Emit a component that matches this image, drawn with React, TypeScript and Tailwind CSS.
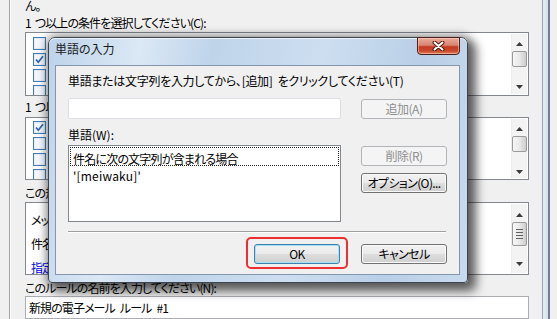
import React from "react";

const F = "font-['Noto_Sans_CJK_JP','Noto_Sans',sans-serif] [font-feature-settings:'palt'] text-[12px] leading-[16px]";

function Sp({ w = 4 }: { w?: number }) {
  return <span className="inline-block" style={{ width: w }} />;
}

function Check({ checked }: { checked?: boolean }) {
  return (
    <svg width="13" height="13" viewBox="0 0 13 13" className="block shrink-0">
      <rect x="0.5" y="0.5" width="12" height="12" fill="#f4f7fb" stroke="#3f7fc1" />
      <rect x="1.5" y="1.5" width="10" height="10" fill="none" stroke="#e3ebf4" />
      {checked && (
        <path d="M3 6.5 L5.3 9.2 L10 3.2" fill="none" stroke="#2d66ae" strokeWidth="1.7" />
      )}
    </svg>
  );
}

function UpArrow() {
  return (
    <svg width="7" height="4" viewBox="0 0 7 4" className="block">
      <path d="M0 4 L3.5 0 L7 4 Z" fill="#3a3a3a" />
    </svg>
  );
}
function DownArrow() {
  return (
    <svg width="7" height="4" viewBox="0 0 7 4" className="block">
      <path d="M0 0 L3.5 4 L7 0 Z" fill="#3a3a3a" />
    </svg>
  );
}

function ScrollBar({
  upTop,
  thumbTop,
  thumbH,
  downTop,
  grip,
}: {
  upTop: number;
  thumbTop: number;
  thumbH: number;
  downTop: number;
  grip?: boolean;
}) {
  return (
    <div className="w-[16px] h-full bg-[#f3f3f3] border-l border-[#ececec] relative shrink-0">
      <div className="absolute left-[4px]" style={{ top: upTop }}>
        <UpArrow />
      </div>
      <div
        className="absolute left-[0px] w-[15px] rounded-[2px] border border-[#9a9a9a] bg-gradient-to-r from-[#f6f6f6] via-[#e9e9e9] to-[#cdcdcd] flex flex-col items-center justify-center gap-[2px]"
        style={{ top: thumbTop, height: thumbH }}
      >
        {grip && (
          <>
            <div className="w-[7px] h-[1px] bg-[#606060]" />
            <div className="w-[7px] h-[1px] bg-[#606060]" />
            <div className="w-[7px] h-[1px] bg-[#606060]" />
            <div className="w-[7px] h-[1px] bg-[#606060]" />
          </>
        )}
      </div>
      <div className="absolute left-[4px]" style={{ top: downTop }}>
        <DownArrow />
      </div>
    </div>
  );
}

function Btn({
  children,
  disabled,
  def,
  className = "",
}: {
  children: React.ReactNode;
  disabled?: boolean;
  def?: boolean;
  className?: string;
}) {
  if (disabled) {
    return (
      <div
        className={`w-[86px] h-[20px] rounded-[3px] border border-[#b1b5ba] bg-[#f4f4f4] text-[#8e8e8e] flex items-center justify-center tracking-[-0.5px] ${className}`}
      >
        {children}
      </div>
    );
  }
  return (
    <div
      className={`w-[86px] h-[20px] rounded-[3px] border ${
        def ? "border-[#3c7fb1] shadow-[inset_0_0_0_1px_#a6e0f7]" : "border-[#707070] shadow-[inset_0_0_0_1px_#fbfbfb]"
      } bg-[linear-gradient(#f2f2f2_0%,#ebebeb_48%,#dddddd_52%,#cfcfcf_100%)] text-black flex items-center justify-center tracking-[-0.6px] ${className}`}
    >
      {children}
    </div>
  );
}

export default function App() {
  return (
    <div className={`w-[557px] h-[319px] relative overflow-hidden bg-[#f0f0f0] text-black ${F}`}>
      {/* background window */}
      <div className="flex h-full">
        <div className="w-[9px]" />
        <div className="w-[2px] border-l border-[#9da3aa] bg-[#fbfbfb]" />
        <div className="w-[531px] pl-[14px] pr-[14px] flex flex-col tracking-[-0.9px]">
          <div className="h-[16px] mt-[-2px]">ん。</div>
          <div className="h-[16px] mt-[1px]">1<Sp />つ以上の条件を選択してください(C):</div>
          <div className="mt-[1px] h-[66px] w-[504px] border border-[#828790] bg-white p-[1px] flex overflow-hidden">
            <div className="flex-1 flex flex-col pl-[6px] pt-[1px]">
              <div className="h-[17px] flex items-center gap-[4px]"><Check /><span>メッセージの受信後</span></div>
              <div className="h-[17px] flex items-center gap-[4px]"><Check checked /><span>件名に [特定の文字] が含まれる場合</span></div>
              <div className="h-[17px] flex items-center gap-[4px]"><Check /><span>本文に [特定の文字] が含まれる場合</span></div>
              <div className="h-[17px] flex items-center gap-[4px]"><Check /><span>送信者が [連絡先] の場合</span></div>
            </div>
            <ScrollBar upTop={8} thumbTop={17} thumbH={16} downTop={51} />
          </div>
          <div className="h-[16px] mt-[3px]">1<Sp />つ以上の処理を選択してください(A):</div>
          <div className="mt-[2px] h-[65px] w-[504px] border border-[#828790] bg-white p-[1px] flex overflow-hidden">
            <div className="flex-1 flex flex-col pl-[6px] pt-[1px]">
              <div className="h-[17px] flex items-center gap-[4px]"><Check checked /><span>指定したフォルダに移動する</span></div>
              <div className="h-[17px] flex items-center gap-[4px]"><Check /><span>メッセージを削除する</span></div>
              <div className="h-[17px] flex items-center gap-[4px]"><Check /><span>メッセージを転送する</span></div>
              <div className="h-[17px] flex items-center gap-[4px]"><Check /><span>メッセージを強調表示する</span></div>
            </div>
            <ScrollBar upTop={8} thumbTop={17} thumbH={16} downTop={51} />
          </div>
          <div className="h-[16px] mt-[5px]">この規則の説明 (下線をクリックして値を編集してください)(D):</div>
          <div className="mt-[1px] h-[75px] w-[504px] border border-[#828790] bg-white p-[1px] flex overflow-hidden">
            <div className="flex-1 flex flex-col pl-[4px] pt-[4px] leading-[24px]">
              <div>メッセージの受信後</div>
              <div>件名に '[meiwaku]' が含まれる場合</div>
              <div><span className="text-[#0000ee] underline">指定</span> フォルダに移動する</div>
            </div>
            <ScrollBar upTop={9} thumbTop={18} thumbH={24} downTop={58} grip />
          </div>
          <div className="h-[16px] mt-[5px]">このルールの名前を入力してください(N):</div>
          <div className="h-[24px] w-[504px] border border-[#abadb3] bg-white pl-[3px] pt-[3px]">新規の電子メール<Sp w={5} />ルール<Sp w={5} />#1</div>
        </div>
        <div className="w-[8px] border-l border-[#9aa3ad] bg-[linear-gradient(90deg,#e6eef6,#d2e0ee)] border-r-2 border-r-[#6f7e90]" />
        <div className="flex-1" />
      </div>

      {/* dialog window */}
      <div className="absolute left-[48px] top-[37px] w-[420px] h-[246px] rounded-t-[7px] rounded-b-[4px] border border-[#3b4450] bg-[linear-gradient(100deg,#bdd3ea_0%,#dbe8f5_20%,#bfd4ea_36%,#cddef0_60%,#b9cfe7_82%,#c8daed_100%)] shadow-[0_0_8px_3px_rgba(0,0,0,0.3),6px_6px_10px_3px_rgba(0,0,0,0.5)] flex flex-col">
        <div className="h-[27px] pl-[6px] pt-[3px] text-[#1b1b1b] shadow-[inset_0_1px_0_rgba(255,255,255,0.7)] rounded-t-[6px]">単語の入力</div>
        <div className="absolute top-[-1px] right-[7px] w-[43px] h-[18px] rounded-b-[4px] border border-[#4a1f17] bg-[linear-gradient(#e9ab9a_0%,#d98470_45%,#c23a22_55%,#c9492d_80%,#e07b5a_100%)] shadow-[inset_0_0_0_1px_rgba(255,220,210,0.5)] flex items-center justify-center">
          <svg width="13" height="10" viewBox="0 0 13 10" className="block">
            <path d="M2.5 1.5 L10.5 8.5 M10.5 1.5 L2.5 8.5" stroke="#4b1a10" strokeWidth="4" strokeLinecap="round" />
            <path d="M2.5 1.5 L10.5 8.5 M10.5 1.5 L2.5 8.5" stroke="#ffffff" strokeWidth="2" strokeLinecap="round" />
          </svg>
        </div>
        <div className="ml-[6px] mr-[7px] h-[210px] border border-[#8496ad] bg-[#f0f0f0] flex flex-col pl-[12px] pr-[12px]">
          <div className="h-[16px] mt-[7px] tracking-[-0.3px]">単語または文字列を入力してから、[追加]<Sp w={5} />をクリックしてください(T)</div>
          <div className="mt-[9px] flex items-start justify-between">
            <div className="w-[273px] h-[21px] rounded-[2px] border border-[#dcdfe3] bg-white" />
            <Btn disabled className="mt-[1px]">追加(A)</Btn>
          </div>
          <div className="h-[16px] mt-[8px]">単語(W):</div>
          <div className="mt-[2px] flex items-start justify-between">
            <div className="w-[273px] h-[77px] border border-[#828790] bg-white p-[1px]">
              <div className="h-[19px] border border-dotted border-[#202020] pl-[2px] pt-[3px] leading-[16px] tracking-[-0.8px]">件名に次の文字列が含まれる場合</div>
              <div className="pl-[3px] pt-[2px] leading-[16px] tracking-[0.2px]">'[meiwaku]'</div>
            </div>
            <div className="flex flex-col">
              <Btn disabled className="mt-[1px]">削除(R)</Btn>
              <Btn className="mt-[7px]">オプション(O)...</Btn>
            </div>
          </div>
          <div className="mt-[9px] h-[2px] w-[378px] border-t border-[#a0a0a0] border-b border-b-white" />
          <div className="mt-[4px] flex items-start justify-end">
            <div className="rounded-[5px] border-2 border-[#ec2f2f] px-[6px] pt-[5px] pb-[3px]">
              <Btn def>OK</Btn>
            </div>
            <Btn className="ml-[13px] mt-[7px]">キャンセル</Btn>
          </div>
        </div>
      </div>
    </div>
  );
}
